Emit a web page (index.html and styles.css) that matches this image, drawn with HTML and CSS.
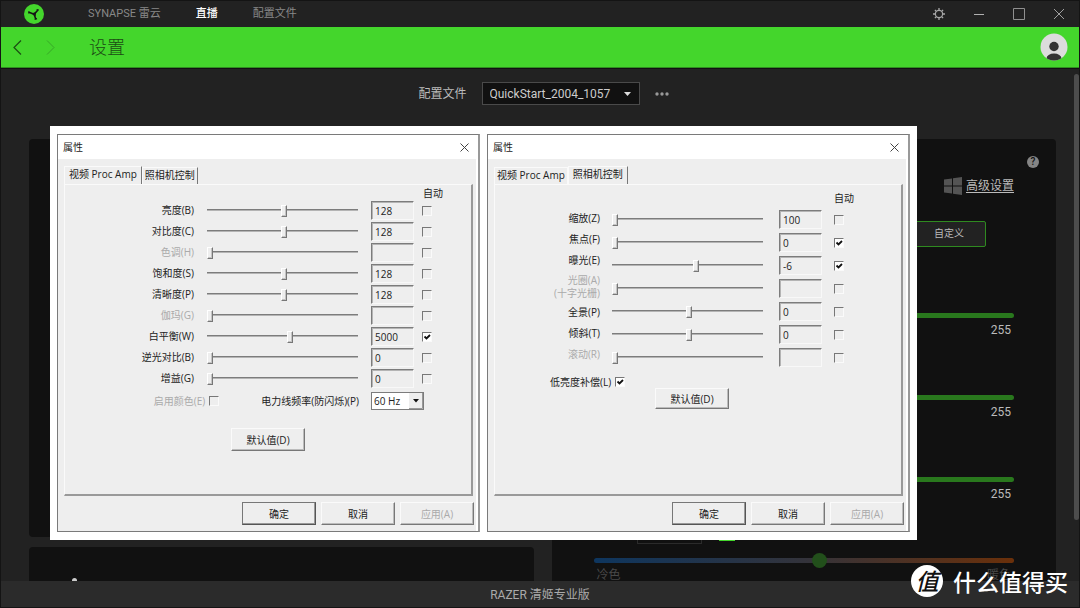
FILE: index.html
```html
<!DOCTYPE html>
<html lang="zh-CN">
<head>
<meta charset="utf-8">
<meta name="viewport" content="width=device-width, initial-scale=1">
<title>RAZER SYNAPSE</title>
<link rel="stylesheet" href="styles.css">
</head>
<body>
<div class="app">
  <header class="titlebar">
    <svg class="logo" viewBox="0 0 20 20" aria-hidden="true"><circle cx="10" cy="10" r="10" fill="#44d62c"/><path d="M5 8.200 10 10.200 13.800 6.200M10 10 11.800 15" fill="none" stroke="#161616" stroke-width="1.600"/><path d="M8 9.200 12.200 8 11.600 12.200 9.600 11.200z" fill="#161616"/><path d="M4.800 7.200v2.200M12.600 5.600l2.200.6M10.600 15.400l2.400-.8" stroke="#161616" stroke-width="1.200"/></svg>
    <nav class="menu">
      <a href="#synapse">SYNAPSE 雷云</a>
      <a href="#live" class="current">直播</a>
      <a href="#profiles">配置文件</a>
    </nav>
    <div class="window-buttons">
      <button type="button" aria-label="选项"><svg width="12" height="12" viewBox="0 0 12 12" fill="none" stroke="#a8a8a8"><circle cx="6" cy="6" r="3.600" stroke-width="1.200"/><path d="M6 0v2M6 10v2M0 6h2M10 6h2M1.900 1.900l1.300 1.300M8.800 8.800l1.300 1.300M10.100 1.900 8.800 3.200M3.200 8.800l-1.300 1.300" stroke-width="1.300"/></svg></button>
      <button type="button" aria-label="最小化"><svg width="12" height="12" viewBox="0 0 12 12"><path d="M1 6.500h10" stroke="#b0b0b0"/></svg></button>
      <button type="button" aria-label="最大化"><svg width="12" height="12" viewBox="0 0 12 12"><path d="M.5.500h11v11H.5z" fill="none" stroke="#909090"/></svg></button>
      <button type="button" aria-label="关闭"><svg width="12" height="12" viewBox="0 0 12 12"><path d="m1 1 10 10M11 1 1 11" stroke="#a0a0a0"/></svg></button>
    </div>
  </header>

  <div class="greenbar">
    <button type="button" class="arrow" aria-label="后退"><svg width="9" height="15" viewBox="0 0 9 15"><path d="M8 .500 1 7.500l7 7" fill="none" stroke="#1c4d14" stroke-width="1.200"/></svg></button>
    <button type="button" class="arrow" aria-label="前进"><svg width="9" height="15" viewBox="0 0 9 15"><path d="m1 .500 7 7-7 7" fill="none" stroke="#37a626"/></svg></button>
    <h1>设置</h1>
    <button type="button" class="avatar" aria-label="账户"><svg width="28" height="28" viewBox="0 0 28 28"><clipPath id="disc"><circle cx="14" cy="14" r="13.500"/></clipPath><g clip-path="url(#disc)"><path d="M0 0h28v28H0z" fill="#dcdcdc"/><circle cx="14" cy="13.500" r="4.700" fill="#333"/><ellipse cx="14" cy="25.500" rx="7.500" ry="5" fill="#333"/></g></svg></button>
  </div>

  <main>
    <div class="profile">
      <label for="profile">配置文件</label>
      <select id="profile"><option>QuickStart_2004_1057</option></select>
      <button type="button" class="more" aria-label="更多"><svg width="14" height="4" viewBox="0 0 14 4" fill="#999"><circle cx="2" cy="2" r="1.700"/><circle cx="7" cy="2" r="1.700"/><circle cx="12" cy="2" r="1.700"/></svg></button>
    </div>
    <div class="cards">
      <div class="column">
        <section class="card preview"></section>
        <section class="card bottom"><i class="mark"></i></section>
      </div>
      <section class="card settings">
        <button type="button" class="help" aria-label="帮助">?</button>
        <a href="#advanced" class="advanced"><svg width="18" height="18" viewBox="0 0 18 18" fill="#545454"><path d="M0 2.500 8 1.500v7H0zM9 1.300 18 0v8.500H9zM0 9.500h8v7l-8-1zM9 9.500h9V18L9 16.700z"/></svg><span>高级设置</span></a>
        <button type="button" class="custom">自定义</button>
        <div class="level"><input type="range" aria-label="亮度" max="255" value="255"><output>255</output></div>
        <div class="level"><input type="range" aria-label="对比度" max="255" value="255"><output>255</output></div>
        <div class="level"><input type="range" aria-label="饱和度" max="255" value="255"><output>255</output></div>
        <div class="balance-head"><span class="field"></span><span class="toggle"></span></div>
        <input class="temperature" type="range" aria-label="白平衡" value="54">
        <div class="ends"><span>冷色</span><span>暖色</span></div>
      </section>
    </div>
    <div class="scrollbar"></div>
  </main>

  <footer class="device">RAZER 清姬专业版</footer>

  <div class="dialogs">
    <section class="window">
      <header class="caption"><h2>属性</h2><button type="button" aria-label="关闭属性"><svg width="9" height="9" viewBox="0 0 9 9"><path d="m.5.500 8 8M8.500.500l-8 8" stroke="#444"/></svg></button></header>
      <div class="tabs"><button type="button" class="tab active">视频 Proc Amp</button><button type="button" class="tab">照相机控制</button></div>
      <div class="panel amp">
        <div class="auto">自动</div>
        <div class="controls">
          <div class="names">
            <label for="a1">亮度(B)</label><label for="a2">对比度(C)</label><label for="a3" class="off">色调(H)</label><label for="a4">饱和度(S)</label><label for="a5">清晰度(P)</label><label for="a6" class="off">伽玛(G)</label><label for="a7">白平衡(W)</label><label for="a8">逆光对比(B)</label><label for="a9">增益(G)</label>
          </div>
          <div class="cells sliders">
            <input id="a1" type="range" value="51"><input id="a2" type="range" value="51"><input id="a3" type="range" value="0" disabled><input id="a4" type="range" value="51"><input id="a5" type="range" value="51"><input id="a6" type="range" value="0" disabled><input id="a7" type="range" value="55"><input id="a8" type="range" value="0"><input id="a9" type="range" value="0">
          </div>
          <div class="cells">
            <input type="text" aria-label="亮度值" value="128"><input type="text" aria-label="对比度值" value="128"><input type="text" aria-label="色调值" disabled><input type="text" aria-label="饱和度值" value="128"><input type="text" aria-label="清晰度值" value="128"><input type="text" aria-label="伽玛值" disabled><input type="text" aria-label="白平衡值" value="5000"><input type="text" aria-label="逆光对比值" value="0"><input type="text" aria-label="增益值" value="0">
          </div>
          <div class="cells">
            <input type="checkbox" aria-label="亮度自动" disabled><input type="checkbox" aria-label="对比度自动" disabled><input type="checkbox" aria-label="色调自动" disabled><input type="checkbox" aria-label="饱和度自动" disabled><input type="checkbox" aria-label="清晰度自动" disabled><input type="checkbox" aria-label="伽玛自动" disabled><input type="checkbox" aria-label="白平衡自动" checked><input type="checkbox" aria-label="逆光对比自动" disabled><input type="checkbox" aria-label="增益自动" disabled>
          </div>
        </div>
        <div class="extra">
          <label for="color" class="off">启用颜色(E)</label><input id="color" type="checkbox" disabled>
          <label for="hz" class="hz-label">电力线频率(防闪烁)(P)</label>
          <select id="hz"><option>60 Hz</option></select>
        </div>
        <button type="button" class="button defaults">默认值(D)</button>
      </div>
      <div class="actions"><button type="button" class="button primary">确定</button><button type="button" class="button">取消</button><button type="button" class="button" disabled>应用(A)</button></div>
    </section>

    <section class="window">
      <header class="caption"><h2>属性</h2><button type="button" aria-label="关闭属性"><svg width="9" height="9" viewBox="0 0 9 9"><path d="m.5.500 8 8M8.500.500l-8 8" stroke="#444"/></svg></button></header>
      <div class="tabs"><button type="button" class="tab">视频 Proc Amp</button><button type="button" class="tab active">照相机控制</button></div>
      <div class="panel camera">
        <div class="auto">自动</div>
        <div class="controls">
          <div class="names">
            <label for="b1">缩放(Z)</label><label for="b2">焦点(F)</label><label for="b3">曝光(E)</label><label for="b4" class="off double">光圈(A)<br>(十字光栅)</label><label for="b5">全景(P)</label><label for="b6">倾斜(T)</label><label for="b7" class="off">滚动(R)</label>
          </div>
          <div class="cells sliders">
            <input id="b1" type="range" value="0"><input id="b2" type="range" value="0"><input id="b3" type="range" value="56"><input id="b4" type="range" value="0" disabled><input id="b5" type="range" value="51"><input id="b6" type="range" value="51"><input id="b7" type="range" value="0" disabled>
          </div>
          <div class="cells">
            <input type="text" aria-label="缩放值" value="100"><input type="text" aria-label="焦点值" value="0"><input type="text" aria-label="曝光值" value="-6"><input type="text" aria-label="光圈值" disabled><input type="text" aria-label="全景值" value="0"><input type="text" aria-label="倾斜值" value="0"><input type="text" aria-label="滚动值" disabled>
          </div>
          <div class="cells">
            <input type="checkbox" aria-label="缩放自动" disabled><input type="checkbox" aria-label="焦点自动" checked><input type="checkbox" aria-label="曝光自动" checked><input type="checkbox" aria-label="光圈自动" disabled><input type="checkbox" aria-label="全景自动" disabled><input type="checkbox" aria-label="倾斜自动" disabled><input type="checkbox" aria-label="滚动自动" disabled>
          </div>
        </div>
        <div class="extra"><label for="low">低亮度补偿(L)</label><input id="low" type="checkbox" checked></div>
        <button type="button" class="button defaults">默认值(D)</button>
      </div>
      <div class="actions"><button type="button" class="button primary">确定</button><button type="button" class="button">取消</button><button type="button" class="button" disabled>应用(A)</button></div>
    </section>
  </div>

  <div class="watermark"><span class="seal">值</span><span>什么值得买</span></div>
</div>
</body>
</html>
```

FILE: styles.css
```css
* { box-sizing: border-box; }

body {
  margin: 0;
  background: #222;
  color: #bbb;
  font: 12px/16px Roboto, "Noto Sans CJK SC", sans-serif;
}

button, input, select { margin: 0; font: inherit; color: inherit; }
button { padding: 0; border: 0; background: none; }
svg { display: block; }
h1, h2 { margin: 0; font-weight: 400; }

.app {
  position: relative;
  display: flex;
  flex-direction: column;
  height: 100vh;
  overflow: hidden;
  border: 1px solid #141414;
}

/* Title bar */
.titlebar {
  display: flex;
  align-items: center;
  flex: none;
  height: 26px;
  padding-left: 23px;
}
.logo { width: 20px; height: 20px; }
.menu { display: flex; gap: 35px; margin-left: 44px; font-size: 11px; }
.menu a { color: #888; text-decoration: none; }
.menu .current { color: #fff; font-weight: 500; }
.window-buttons { display: flex; margin-left: auto; }
.window-buttons button { display: grid; place-items: center; width: 40px; height: 26px; }

.greenbar {
  display: flex;
  align-items: center;
  flex: none;
  height: 41px;
  padding-right: 11px;
  background: #44d62c;
  border-bottom: 1px solid #2f8f20;
}
.arrow { display: grid; place-items: center; width: 33px; height: 40px; }
.greenbar h1 { margin-left: 22px; padding-top: 2px; font-size: 18px; line-height: 24px; font-weight: 300; color: #1c4a14; }
.avatar { margin-left: auto; }

/* Page behind the dialogs */
main {
  position: relative;
  flex: 1;
  min-height: 0;
  overflow: hidden;
  padding: 13px 23px 0 28px;
  border-top: 1px solid #111;
}
.profile { display: flex; align-items: center; justify-content: center; gap: 15px; height: 23px; padding-left: 2px; }
.profile select {
  appearance: none;
  width: 158px;
  height: 23px;
  padding: 0 7px;
  border: 1px solid #4a4a4a;
  border-radius: 0;
  background: url("data:image/svg+xml,%3Csvg xmlns='http://www.w3.org/2000/svg' width='7' height='4'%3E%3Cpath d='M0 0h7L3.500 4z' fill='%23ddd'/%3E%3C/svg%3E") right 8px center no-repeat #111;
  color: #ccc;
}

.cards { display: grid; grid-template-columns: 1fr 1fr; gap: 18px; margin-top: 34px; }
.column { display: flex; flex-direction: column; gap: 10px; }
.card { background: #111; border-radius: 4px; }
.preview { height: 398px; }
.bottom { height: 80px; padding: 31px 43px; }
.mark { display: block; width: 5px; height: 8px; border-radius: 3px; background: #ccc; }
.settings { display: flex; flex-direction: column; padding: 17px 42px 0; }
.help {
  align-self: flex-end;
  width: 12px;
  height: 12px;
  margin-right: -25px;
  border-radius: 50%;
  background: #858585;
  color: #111;
  font-size: 10px;
  line-height: 12px;
  font-weight: 500;
}
.advanced {
  display: flex;
  align-items: center;
  align-self: flex-end;
  gap: 4px;
  height: 20px;
  margin-top: 8px;
  color: #bbb;
  text-decoration: none;
}
.advanced span { text-decoration: underline; text-underline-offset: 2px; }
.custom {
  align-self: flex-end;
  width: 74px;
  height: 26px;
  margin: 25px 28px 66px 0;
  border: 1px solid #2f8a20;
  border-radius: 2px;
  background: #222;
  font-size: 10px;
}
.level { display: flex; flex-direction: column; height: 82px; }
.level input { appearance: none; width: 100%; height: 5px; border-radius: 3px; background: #29781d; }
.level input::-webkit-slider-thumb { appearance: none; width: 1px; height: 1px; }
.level output { align-self: flex-end; margin: 2px 3px 0 0; line-height: 20px; }
.balance-head { display: flex; gap: 17px; height: 1px; margin-top: -19px; padding-left: 43px; }
.field { flex: none; width: 65px; height: 4px; border: 1px solid #2b2b2b; border-top: 0; }
.toggle { flex: none; width: 16px; height: 1px; background: #44d62c; }
.temperature {
  appearance: none;
  width: 100%;
  height: 5px;
  margin-top: 17px;
  border-radius: 3px;
  background: linear-gradient(90deg, #0e365f, #33333b 50%, #6b300a);
}
.temperature::-webkit-slider-thumb { appearance: none; width: 15px; height: 15px; border-radius: 50%; background: #224f1b; }
.ends { display: flex; justify-content: space-between; padding: 4px 3px 0; color: #484848; }
.scrollbar { position: absolute; top: 5px; right: 0; width: 5px; height: 446px; border-radius: 3px; background: #4d4d4d; }

.device { flex: none; height: 26px; padding-top: 1px; background: #2b2b2b; text-align: center; line-height: 26px; color: #aaa; }

/* Property dialogs */
.dialogs {
  position: absolute;
  top: 125px;
  left: 49px;
  right: 162px;
  display: flex;
  gap: 7px;
  padding: 8px 7px;
  background: #fff;
  color: #222;
  font: 10px/14px "Open Sans", "Noto Sans CJK SC", sans-serif;
}
.window {
  flex: 1;
  min-width: 0;
  padding-bottom: 6px;
  border: 1px solid #7a7a7a;
  border-right: 2px solid #999;
  background: #eee;
  box-shadow: inset -2px 0 #fff;
}
.caption { display: flex; align-items: center; justify-content: space-between; height: 24px; padding: 0 9px 0 5px; background: #fff; }
.caption h2 { font-size: 10px; line-height: 14px; }
.tabs { display: flex; align-items: flex-end; height: 25px; padding: 0 6px; }
.tab { height: 17px; padding: 0 2px 2px; border: 1px solid #fafafa; border-bottom: 0; white-space: nowrap; }
.tab.active { height: 18px; padding: 0 4px 3px; }
.tab:last-child, .tab.active:first-child { border-right-color: #777; }
.panel {
  display: flex;
  flex-direction: column;
  height: 312px;
  margin: 0 5px 0 6px;
  border: solid;
  border-width: 1px 2px 2px 1px;
  border-color: #fafafa #999 #999 #fafafa;
}
.amp { --pitch: 21px; }
.camera { --pitch: 23px; }
.auto { align-self: flex-end; }
.amp .auto { margin-right: 28px; padding-top: 1px; }
.camera .auto { margin-right: 47px; padding: 6px 0 3px; }
.controls { display: grid; }
.amp .controls { grid-template-columns: 1fr 161px 43px 10px; column-gap: 8px; padding-right: 39px; }
.amp .sliders { padding: 0 5px; }
.camera .controls { grid-template-columns: 1fr 155px 43px 10px; column-gap: 12px; padding-right: 57px; }
.camera .sliders { padding-right: 4px; }
.names { display: flex; flex-direction: column; align-items: flex-end; }
.names label { line-height: 21px; }
.names .double { padding: 3px 0 2px; line-height: 13px; text-align: right; }
.off { color: #aaa; }
.cells { display: grid; grid-auto-rows: var(--pitch); align-items: center; align-content: start; }

.dialogs input[type="range"] {
  appearance: none;
  width: 100%;
  height: 12px;
  background: linear-gradient(#7c7c7c 50%, #b4b4b4 50%) 0 4px / 100% 2px no-repeat;
}
.dialogs input[type="range"]::-webkit-slider-thumb {
  appearance: none;
  width: 6px;
  height: 12px;
  border: 1px solid;
  border-color: #fff #777 #777 #fff;
  background: #eee;
  box-shadow: inset -1px -1px #c4c4c4;
}
.dialogs input[type="text"] {
  width: 100%;
  height: 19px;
  padding: 0 3px;
  border: 1px solid;
  border-color: #7c7c7c #f8f8f8 #f8f8f8 #7c7c7c;
  border-radius: 0;
  background: #eee;
  box-shadow: inset 1px 1px #b4b4b4;
}
.dialogs input[type="checkbox"] {
  appearance: none;
  display: grid;
  place-items: center;
  flex: none;
  width: 10px;
  height: 10px;
  border: 1px solid;
  border-color: #777 #fafafa #fafafa #777;
  background: #eee;
}
.dialogs input[type="checkbox"]:checked {
  background: url("data:image/svg+xml,%3Csvg xmlns='http://www.w3.org/2000/svg' width='8' height='8'%3E%3Cpath d='m1.500 3.500 2 2 3.500-3.500' fill='none' stroke='%23111' stroke-width='1.800'/%3E%3C/svg%3E") center no-repeat #fff;
}

.extra { display: flex; align-items: center; }
.extra input { margin-left: 4px; }
.amp .extra { justify-content: flex-end; height: 23px; padding-right: 47px; }
.hz-label { margin: 0 12px 0 42px; }
.extra select {
  appearance: none;
  width: 53px;
  height: 18px;
  padding: 0 2px;
  border: 1px solid #7c7c7c;
  border-radius: 0;
  background: url("data:image/svg+xml,%3Csvg xmlns='http://www.w3.org/2000/svg' width='14' height='16'%3E%3Cpath d='M0 0h14v16H0z' fill='%23eee'/%3E%3Cpath d='M0 15.500h13.500V0' fill='none' stroke='%23999'/%3E%3Cpath d='M4 6h6L7 9.500z' fill='%23111'/%3E%3C/svg%3E") right center no-repeat #fff;
}
.camera .extra { align-self: flex-start; height: 20px; margin: 3px 0 0 55px; }

.button {
  width: 74px;
  height: 23px;
  border: 1px solid;
  border-color: #fafafa #777 #777 #fafafa;
  background: #eee;
  box-shadow: inset -1px -1px #bbb;
}
.button:disabled { color: #aaa; }
.button.primary { border-color: #777 #555 #555 #777; box-shadow: inset -1px -1px #999; }
.amp .defaults { margin: 16px 0 0 166px; }
.camera .defaults { height: 21px; margin: -4px 0 0 160px; }
.actions { display: flex; justify-content: flex-end; gap: 5px; padding: 6px 4px 0 0; }

.watermark {
  position: absolute;
  right: 11px;
  bottom: 10px;
  display: flex;
  align-items: center;
  gap: 10px;
  color: #fff;
  font: 500 23px/30px "Noto Sans CJK SC", sans-serif;
}
.seal { width: 32px; height: 32px; border-radius: 50%; background: #fff; color: #111; text-align: center; font-style: italic; }
```
